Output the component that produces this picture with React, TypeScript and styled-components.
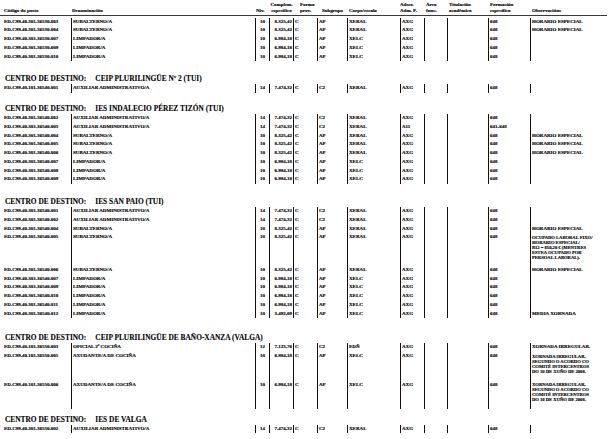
import React from 'react';
import styled, { createGlobalStyle } from 'styled-components';

const GlobalStyle = createGlobalStyle`
  html, body {
    margin: 0;
    padding: 0;
    background: #ffffff;
  }
  body {
    font-family: "Liberation Serif", "Times New Roman", serif;
    color: #000;
  }
`;

const COLUMNS = '71px 184px 14px 24px 24px 30px 53px 24px 23px 41px 42px 85px';
const ROW_H = 8.75;

type Post = {
  code: string;
  name: string;
  niv: string;
  comp: string;
  subgrupo: string;
  corpo: string;
  adscr: string;
  form: string;
  obs?: string[];
  h?: number;
};

type Centre = {
  title?: string;
  mt: number;
  posts: Post[];
};

const sub = (code: string, obs?: string[], h?: number): Post => ({
  code, name: 'SUBALTERNO/A', niv: '10', comp: '8.325,42', subgrupo: 'AP', corpo: 'XERAL', adscr: 'AXG', form: '648', obs, h,
});
const limp = (code: string, comp = '6.984,18', obs?: string[]): Post => ({
  code, name: 'LIMPADOR/A', niv: '10', comp, subgrupo: 'AP', corpo: 'XELC', adscr: 'AXG', form: '648', obs,
});
const aux = (code: string, adscr = 'AXG', form = '648'): Post => ({
  code, name: 'AUXILIAR ADMINISTRATIVO/A', niv: '14', comp: '7.474,32', subgrupo: 'C2', corpo: 'XERAL', adscr, form,
});

const HE = ['HORARIO ESPECIAL'];
const XORNADA = ['XORNADA IRREGULAR,', 'SEGUNDO O ACORDO CO', 'COMITÉ INTERCENTROS', 'DO 10 DE XUÑO DE 2008.'];

const centres: Centre[] = [
  {
    mt: 0,
    posts: [
      sub('ED.C99.40.301.36530.003', HE),
      sub('ED.C99.40.301.36530.004', HE),
      limp('ED.C99.40.301.36530.007'),
      limp('ED.C99.40.301.36530.009'),
      limp('ED.C99.40.301.36530.010'),
    ],
  },
  {
    title: 'CEIP PLURILINGÜE Nº 2 (TUI)',
    mt: 12,
    posts: [aux('ED.C99.40.101.36540.001')],
  },
  {
    title: 'IES INDALECIO PÉREZ TIZÓN (TUI)',
    mt: 10,
    posts: [
      aux('ED.C99.40.301.36540.002'),
      aux('ED.C99.40.301.36540.003', 'A11', '641-648'),
      sub('ED.C99.40.301.36540.004', HE),
      sub('ED.C99.40.301.36540.005', HE),
      sub('ED.C99.40.301.36540.006', HE),
      limp('ED.C99.40.301.36540.007'),
      limp('ED.C99.40.301.36540.008'),
      limp('ED.C99.40.301.36540.009'),
    ],
  },
  {
    title: 'IES SAN PAIO (TUI)',
    mt: 12,
    posts: [
      aux('ED.C99.40.301.36540.001'),
      aux('ED.C99.40.301.36540.002'),
      sub('ED.C99.40.301.36540.004', HE),
      sub(
        'ED.C99.40.301.36540.005',
        ['OCUPADO LABORAL FIXO/', 'HORARIO ESPECIAL/', 'B12 = 850,20 € (MENTRES', 'ESTEA OCUPADO POR', 'PERSOAL LABORAL).'],
        32.5,
      ),
      sub('ED.C99.40.301.36540.006', HE),
      limp('ED.C99.40.301.36540.007'),
      limp('ED.C99.40.301.36540.009'),
      limp('ED.C99.40.301.36540.010'),
      limp('ED.C99.40.301.36540.011'),
      limp('ED.C99.40.301.36540.012', '3.492,09', ['MEDIA XORNADA']),
    ],
  },
  {
    title: 'CEIP PLURILINGÜE DE BAÑO-XANZA (VALGA)',
    mt: 14,
    posts: [
      {
        code: 'ED.C99.40.101.36550.003', name: 'OFICIAL 2ª COCIÑA', niv: '12', comp: '7.123,76', subgrupo: 'C2',
        corpo: 'EDÑ', adscr: 'AXG', form: '648', obs: ['XORNADA IRREGULAR.'],
      },
      {
        code: 'ED.C99.40.101.36550.005', name: 'AXUDANTE/A DE COCIÑA', niv: '10', comp: '6.984,18', subgrupo: 'AP',
        corpo: 'XELC', adscr: 'AXG', form: '648', obs: XORNADA, h: 28.5,
      },
      {
        code: 'ED.C99.40.101.36550.006', name: 'AXUDANTE/A DE COCIÑA', niv: '10', comp: '6.984,18', subgrupo: 'AP',
        corpo: 'XELC', adscr: 'AXG', form: '648', obs: XORNADA, h: 28,
      },
    ],
  },
  {
    title: 'IES DE VALGA',
    mt: 5,
    posts: [aux('ED.C99.40.301.36550.002')],
  },
];

const Page = styled.div`
  width: 615px;
  height: 439px;
  overflow: hidden;
  font-weight: bold;
`;

const HeaderRow = styled.div`
  display: grid;
  grid-template-columns: ${COLUMNS};
  width: 607px;
  height: 14.5px;
  border-bottom: 1px solid #3a3a3a;
  margin-bottom: 2px;
`;

const HeaderCell = styled.div<{ $pl?: number; $center?: boolean }>`
  display: flex;
  flex-direction: column;
  justify-content: flex-end;
  align-items: ${p => (p.$center ? 'center' : 'flex-start')};
  padding-left: ${p => p.$pl ?? 1}px;
  font-size: 5px;
  line-height: 6.5px;
  white-space: nowrap;
  -webkit-text-stroke: 0.15px #000;
`;

const CentreTitle = styled.div<{ $mt: number }>`
  display: flex;
  gap: 9px;
  margin-top: ${p => p.$mt}px;
  height: 11px;
  padding-left: 5px;
  font-size: 7.4px;
  line-height: 11px;
  white-space: nowrap;
  -webkit-text-stroke: 0.1px #000;
`;

const Row = styled.div<{ $h?: number }>`
  display: grid;
  grid-template-columns: ${COLUMNS};
  height: ${p => p.$h ?? ROW_H}px;
`;

const Cell = styled.div<{ $align?: 'left' | 'center' | 'right'; $first?: boolean }>`
  border-left: ${p => (p.$first ? 'none' : '1px solid #111')};
  padding-left: ${p => (p.$first ? 4 : p.$align === 'left' || !p.$align ? 1 : 0)}px;
  padding-right: ${p => (p.$align === 'right' ? 1 : 0)}px;
  text-align: ${p => p.$align ?? 'left'};
  font-size: 5px;
  line-height: ${ROW_H}px;
  white-space: nowrap;
  overflow: hidden;
  -webkit-text-stroke: 0.15px #000;
`;

const ObsCell = styled(Cell)<{ $multi?: boolean }>`
  line-height: ${p => (p.$multi ? '5px' : `${ROW_H}px`)};
  padding-top: ${p => (p.$multi ? 1.9 : 0)}px;
  font-size: ${p => (p.$multi ? 4.6 : 5)}px;
`;

const Header: React.FC = () => (
  <HeaderRow>
    <HeaderCell $pl={4}>Código do posto</HeaderCell>
    <HeaderCell $pl={1}>Denominación</HeaderCell>
    <HeaderCell $pl={1}>Niv.</HeaderCell>
    <HeaderCell $center>
      <span>Complem.</span>
      <span>específico</span>
    </HeaderCell>
    <HeaderCell $pl={7}>
      <span>Forma</span>
      <span>prov.</span>
    </HeaderCell>
    <HeaderCell $pl={5}>Subgrupo</HeaderCell>
    <HeaderCell $pl={2}>Corpo/escala</HeaderCell>
    <HeaderCell $pl={0}>
      <span>Adscr.</span>
      <span>Adm. P.</span>
    </HeaderCell>
    <HeaderCell $pl={2}>
      <span>Área</span>
      <span>func.</span>
    </HeaderCell>
    <HeaderCell $pl={2}>
      <span>Titulación</span>
      <span>académica</span>
    </HeaderCell>
    <HeaderCell $pl={2}>
      <span>Formación</span>
      <span>específica</span>
    </HeaderCell>
    <HeaderCell $pl={2}>Observacións</HeaderCell>
  </HeaderRow>
);

const PostRow: React.FC<{ post: Post }> = ({ post }) => {
  const multi = (post.obs?.length ?? 0) > 1;
  return (
    <Row $h={post.h}>
      <Cell $first>{post.code}</Cell>
      <Cell>{post.name}</Cell>
      <Cell $align="center">{post.niv}</Cell>
      <Cell $align="right">{post.comp}</Cell>
      <Cell>C</Cell>
      <Cell>{post.subgrupo}</Cell>
      <Cell>{post.corpo}</Cell>
      <Cell>{post.adscr}</Cell>
      <Cell />
      <Cell />
      <Cell>{post.form}</Cell>
      <ObsCell $multi={multi}>
        {post.obs?.map((line, i) => (
          <div key={i}>{line}</div>
        ))}
      </ObsCell>
    </Row>
  );
};

const App: React.FC = () => (
  <>
    <GlobalStyle />
    <Page>
      <Header />
      {centres.map((centre, i) => (
        <section key={i}>
          {centre.title && (
            <CentreTitle $mt={centre.mt}>
              <span>CENTRO DE DESTINO:</span>
              <span>{centre.title}</span>
            </CentreTitle>
          )}
          {centre.posts.map(post => (
            <PostRow key={post.code} post={post} />
          ))}
        </section>
      ))}
    </Page>
  </>
);

export default App;
